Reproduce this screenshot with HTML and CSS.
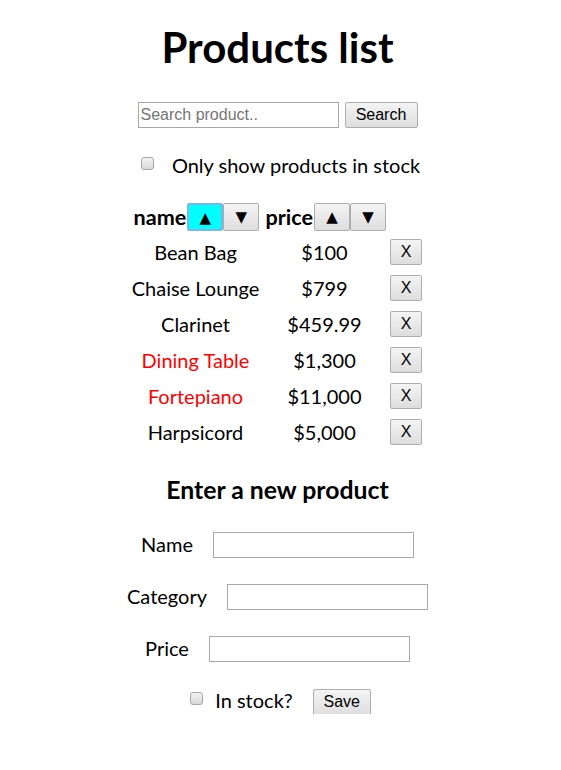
FILE: index.html
```html
<!DOCTYPE html>
<html>
<head>
<meta charset="utf-8">
<link rel="stylesheet" href="styles.css">
</head>
<body>
<div class="app">
  <h1 class="title">Products list</h1>
  <div class="search">
    <input class="text-input" type="text" placeholder="Search product..">
    <button class="btn btn-search">Search</button>
  </div>
  <label class="check-line filter">
    <input class="check" type="checkbox">
    <span>Only show products in stock</span>
  </label>
  <div class="table">
    <div class="th">name<button class="btn btn-sort btn-active">▲</button><button class="btn btn-sort">▼</button></div>
    <div class="th">price<button class="btn btn-sort">▲</button><button class="btn btn-sort">▼</button></div>
    <div class="th"></div>

    <div class="td">Bean Bag</div><div class="td">$100</div><div class="td"><button class="btn btn-x">X</button></div>
    <div class="td">Chaise Lounge</div><div class="td">$799</div><div class="td"><button class="btn btn-x">X</button></div>
    <div class="td">Clarinet</div><div class="td">$459.99</div><div class="td"><button class="btn btn-x">X</button></div>
    <div class="td out">Dining Table</div><div class="td">$1,300</div><div class="td"><button class="btn btn-x">X</button></div>
    <div class="td out">Fortepiano</div><div class="td">$11,000</div><div class="td"><button class="btn btn-x">X</button></div>
    <div class="td">Harpsicord</div><div class="td">$5,000</div><div class="td"><button class="btn btn-x">X</button></div>
  </div>
  <h3 class="subtitle">Enter a new product</h3>
  <div class="form-row first"><span class="label">Name</span><input class="text-input" type="text"></div>
  <div class="form-row"><span class="label">Category</span><input class="text-input" type="text"></div>
  <div class="form-row"><span class="label">Price</span><input class="text-input" type="text"></div>
  <div class="form-row stock-row">
    <label class="check-line small"><input class="check" type="checkbox"><span>In stock?</span></label>
    <button class="btn btn-save">Save</button>
  </div>
</div>
</body>
</html>
```

FILE: styles.css
```css
html, body {
  margin: 0;
  padding: 0;
  background: #fff;
}
body {
  font-family: Lato, "Open Sans", sans-serif;
  font-size: 20px;
  color: #000;
}
.app {
  display: flex;
  flex-direction: column;
  align-items: center;
  padding-right: 6px;
}
.title {
  margin: 20px 0 0;
  font-size: 42px;
  line-height: 54px;
  font-weight: 700;
  height: 54px;
}
.search {
  margin-top: 28px;
  display: flex;
  gap: 6px;
  height: 26px;
}
.text-input {
  box-sizing: border-box;
  width: 201px;
  height: 26px;
  border: 1px solid #a9a9a9;
  padding: 1px 2px;
  font-family: "Liberation Sans", Arial, sans-serif;
  font-size: 16px;
  margin: 0;
  outline: none;
}
.text-input::placeholder {
  color: #757575;
}
.btn {
  box-sizing: border-box;
  margin: 0;
  border: 1px solid #adadad;
  border-radius: 2px;
  background: linear-gradient(#f4f4f4, #dedede);
  color: #000;
  font-family: "Liberation Sans", Arial, sans-serif;
  font-size: 16px;
  padding: 0;
  cursor: pointer;
}
.btn-search {
  width: 73px;
  height: 26px;
}
.check-line {
  display: flex;
  align-items: center;
  gap: 18px;
  height: 28px;
  margin-top: 23px;
  line-height: 28px;
  white-space: nowrap;
}
.filter {
  margin-left: 6px;
}
.check {
  appearance: none;
  -webkit-appearance: none;
  box-sizing: border-box;
  width: 13px;
  height: 13px;
  margin: 0 0 4px;
  border: 1px solid #a6a6a6;
  border-radius: 3px;
  background: linear-gradient(#f2f2f2, #d9d9d9);
}
.table {
  margin-top: 24px;
  display: grid;
  grid-template-columns: 124px 118px 32px;
  column-gap: 8px;
  padding-left: 2px;
}
.table > :nth-child(3n) {
  margin-left: -3px;
}
.th {
  display: flex;
  align-items: center;
  height: 28px;
  font-weight: 700;
  font-size: 21.6px;
  margin-bottom: 3px;
  white-space: nowrap;
}
.btn-sort {
  width: 36px;
  height: 28px;
  font-size: 15px;
  font-family: "DejaVu Sans", sans-serif;
  line-height: 26px;
  flex: none;
}
.btn-sort:first-of-type {
  margin-left: 1px;
}
.btn-active {
  background: #00ffff;
  border: 2px solid #7eb4ea;
}
.td {
  height: 36px;
  display: flex;
  align-items: center;
  justify-content: center;
  white-space: nowrap;
}
.out {
  color: #ff0000;
}
.btn-x {
  width: 32px;
  height: 26px;
}
.subtitle {
  margin: 25px 0 0;
  font-size: 24.8px;
  line-height: 30px;
  font-weight: 700;
}
.form-row {
  display: flex;
  align-items: center;
  gap: 20px;
  height: 28px;
  margin-top: 24px;
}
.form-row.first {
  margin-top: 26px;
}
.label {
  margin-bottom: 2px;
}
.stock-row {
  gap: 20px;
  margin-left: 6px;
  margin-top: 23px;
}
.check-line.small {
  margin-top: 0;
  gap: 12px;
}
.btn-save {
  width: 58px;
  height: 27px;
  margin-top: 4px;
}
```
